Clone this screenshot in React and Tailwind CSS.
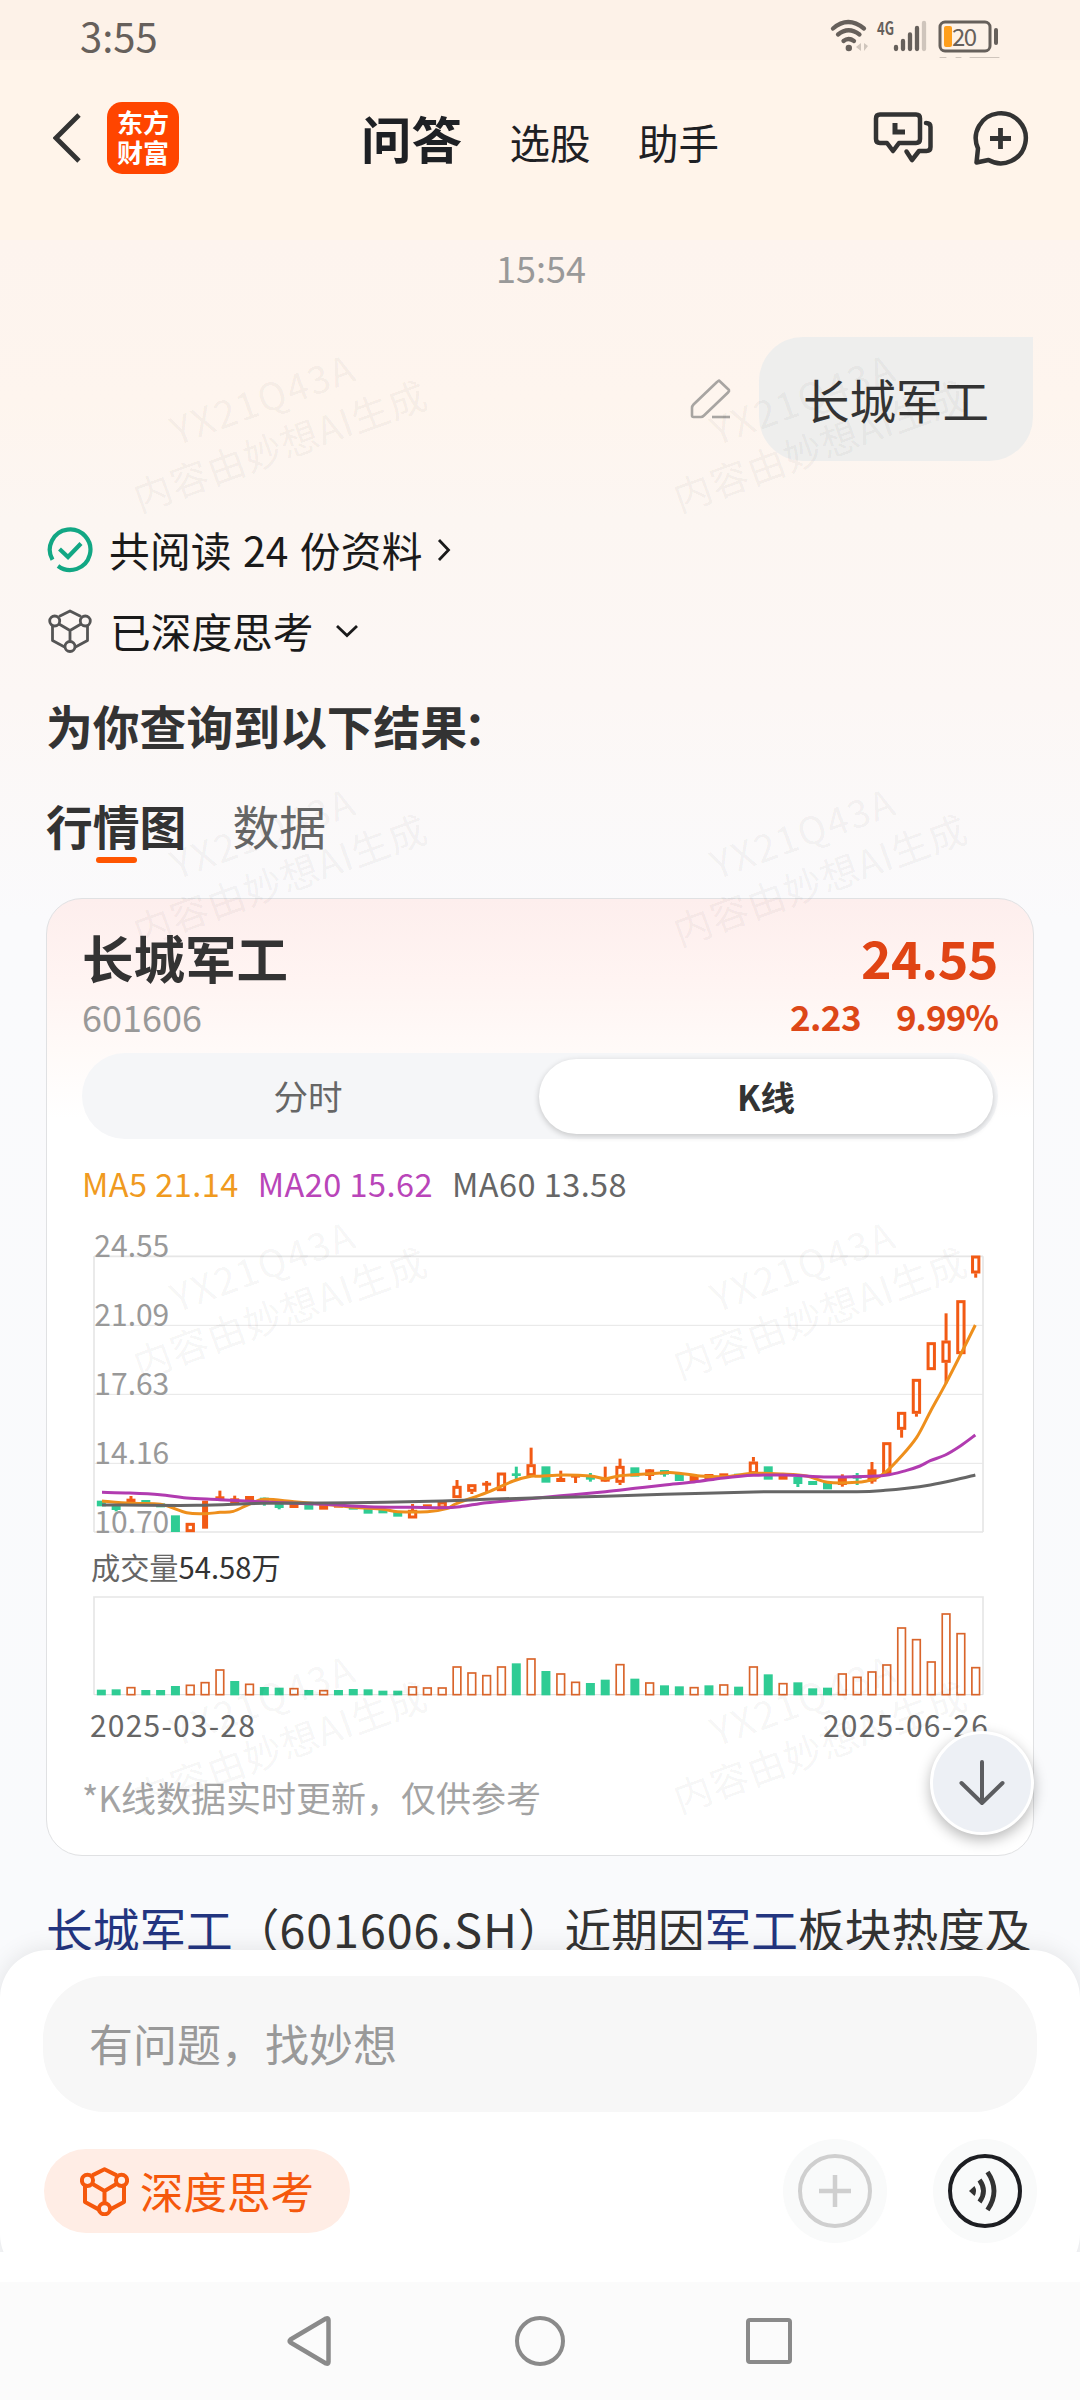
// src/App.jsx
import React from 'react';

const UP = '#f25a14';
const DOWN = '#2fcc94';

// Chart units are a third of a pixel
const STEP = 44.46;
const FIRST = 64;

// [kind, bodyTop, bodyBottom, wickTop, wickBottom]; g = down, r = up, h = up (hollow)
const candles = [
  ['g', 842, 859], ['g', 857, 870, 857, 874], ['r', 836, 848, 828, 848], ['g', 840, 851],
  ['g', 850, 862], ['g', 886, 936], ['h', 909, 936], ['n', 842, 926],
  ['r', 829, 838, 812, 838], ['r', 835, 850, 827, 850], ['r', 828, 842], ['g', 833, 850, 833, 857],
  ['g', 851, 864, 851, 868], ['r', 850, 864], ['g', 853, 869], ['r', 855, 869],
  ['r', 853, 863], ['g', 855, 869], ['g', 865, 881], ['g', 868, 880],
  ['g', 873, 890], ['h', 870, 895, 852, 870], ['r', 853, 866], ['h', 845, 865],
  ['h', 798, 834, 780, 798], ['h', 793, 815, 815, 822], ['r', 788, 797, 783, 816], ['h', 758, 813],
  ['g', 760, 768, 740, 777], ['h', 733, 768, 683, 733], ['g', 739, 788], ['r', 774, 786, 752, 786],
  ['r', 764, 773, 764, 789], ['g', 766, 779, 759, 785], ['r', 773, 785, 740, 785], ['h', 738, 788, 716, 795],
  ['g', 742, 770], ['r', 748, 768, 748, 780], ['g', 750, 764, 750, 770], ['g', 762, 783],
  ['r', 765, 783], ['r', 762, 783], ['r', 760, 772], ['g', 761, 770],
  ['h', 725, 762, 711, 725], ['g', 739, 779], ['r', 765, 779], ['g', 771, 792, 771, 801],
  ['g', 783, 795], ['g', 788, 808], ['r', 768, 795, 763, 800], ['g', 765, 776, 759, 795],
  ['r', 748, 785, 726, 791], ['h', 667, 762], ['h', 576, 629, 629, 653], ['h', 477, 581, 581, 590],
  ['h', 367, 450], ['h', 362, 428, 280, 490], ['h', 241, 402], ['h', 107, 160, 160, 173],
];

const ma5 = [
  [66, 843], [153, 850], [242, 853], [320, 878], [375, 881], [420, 877], [460, 874], [509, 852], [553, 838],
  [642, 845], [731, 853], [820, 862], [909, 868], [953, 875], [1042, 875], [1100, 866], [1131, 850],
  [1220, 818], [1300, 783], [1353, 769], [1380, 769], [1450, 765], [1531, 768], [1576, 776], [1620, 767],
  [1710, 761], [1780, 758], [1860, 768], [1940, 770], [2020, 760], [2109, 762], [2180, 768], [2243, 787],
  [2330, 787], [2380, 778], [2416, 757], [2461, 712], [2510, 652], [2551, 575], [2596, 493], [2641, 405], [2686, 315],
];

const ma20 = [
  [66, 817], [150, 819], [240, 824], [320, 834], [420, 839], [553, 846], [731, 853], [864, 860], [998, 862],
  [1087, 863], [1140, 860], [1220, 848], [1309, 840], [1380, 833], [1480, 824], [1576, 815], [1665, 805],
  [1754, 795], [1842, 786], [1931, 774], [2020, 766], [2109, 765], [2243, 771], [2331, 770], [2416, 766],
  [2480, 751], [2520, 738], [2551, 722], [2596, 705], [2641, 678], [2686, 645],
];

const ma60 = [
  [66, 855], [350, 856], [553, 850], [820, 848], [1087, 843], [1220, 838], [1380, 833], [1576, 829],
  [1754, 823], [2020, 816], [2109, 815], [2331, 815], [2416, 811], [2480, 805], [2551, 795], [2620, 781], [2686, 765],
];

// [top, isUp]
const volumes = [
  [449, 0], [448, 0], [442, 1], [450, 0], [450, 0], [438, 0], [435, 1], [427, 1], [389, 1], [423, 0],
  [432, 1], [441, 0], [443, 0], [445, 1], [450, 0], [451, 1], [450, 0], [447, 0], [448, 0], [452, 0],
  [452, 0], [440, 1], [443, 1], [443, 1], [380, 1], [398, 1], [406, 1], [380, 1], [370, 0], [356, 1],
  [393, 0], [401, 1], [426, 1], [429, 0], [419, 0], [373, 1], [416, 0], [428, 1], [436, 0], [439, 0],
  [442, 1], [436, 0], [434, 1], [440, 0], [380, 1], [403, 0], [430, 1], [427, 0], [445, 0], [443, 0],
  [401, 1], [411, 1], [395, 1], [374, 1], [263, 1], [298, 1], [365, 1], [221, 1], [280, 1], [382, 1],
];

const priceLines = [
  { y: 109, label: '24.55' },
  { y: 316, label: '21.09' },
  { y: 523, label: '17.63' },
  { y: 730, label: '14.16' },
  { y: 936, label: '10.70' },
];

function smooth(points) {
  return points.reduce((d, p, i) => {
    if (i === 0) return `M${p[0]} ${p[1]}`;
    const a = points[i - 2] || points[i - 1];
    const b = points[i - 1];
    const c = points[i + 1] || p;
    const c1 = [b[0] + (p[0] - a[0]) / 6, b[1] + (p[1] - a[1]) / 6];
    const c2 = [p[0] - (c[0] - b[0]) / 6, p[1] - (c[1] - b[1]) / 6];
    return `${d}C${c1[0]} ${c1[1]} ${c2[0]} ${c2[1]} ${p[0]} ${p[1]}`;
  }, '');
}

function Candle({ data, x }) {
  const [kind, top, bottom, wickTop, wickBottom] = data;
  const color = kind === 'g' ? DOWN : UP;
  const hollow = kind === 'h';
  const half = kind === 'n' ? 9 : 13.5;
  return (
    <g>
      {wickTop !== undefined && !hollow && (
        <rect x={x - 4.5} y={wickTop} width="9" height={wickBottom - wickTop} fill={color} />
      )}
      {wickTop !== undefined && hollow && wickTop < top && (
        <rect x={x - 4.5} y={wickTop} width="9" height={top - wickTop} fill={color} />
      )}
      {wickTop !== undefined && hollow && wickBottom > bottom && (
        <rect x={x - 4.5} y={bottom} width="9" height={wickBottom - bottom} fill={color} />
      )}
      {hollow ? (
        <rect x={x - 9.5} y={top + 4} width="19" height={bottom - top - 8} fill="none" stroke={color} strokeWidth="9" />
      ) : (
        <rect x={x - half} y={top} width={half * 2} height={bottom - top} fill={color} />
      )}
    </g>
  );
}

function PriceChart() {
  return (
    <svg className="mt-[17px] -ml-[2px] block h-[320px] w-[920px]" viewBox="0 0 2760 960">
      {priceLines.map(({ y }, i) => (
        <line key={y} x1="42" x2="2709" y1={y} y2={y} stroke="#e6e6e6" strokeWidth={i === 0 || i === 4 ? 5 : 3} />
      ))}
      <path d="M42 109V936M2709 109V936" stroke="#e6e6e6" strokeWidth="5" />
      {priceLines.map(({ y, label }) => (
        <text key={label} x="43" y={y + 3} fontSize="90" fill="#999">{label}</text>
      ))}
      {candles.map((c, i) => (
        <Candle key={i} data={c} x={FIRST + STEP * i} />
      ))}
      <g fill="none" strokeWidth="9">
        <path d={smooth(ma5)} stroke="#ee8f1c" />
        <path d={smooth(ma20)} stroke="#b13bb0" />
        <path d={smooth(ma60)} stroke="#666" />
      </g>
    </svg>
  );
}

function VolumeChart() {
  return (
    <svg className="-ml-[2px] block h-[114px] w-[920px]" viewBox="0 138 2760 342">
      <path d="M42 464V171H2709V464" fill="none" stroke="#e6e6e6" strokeWidth="5" />
      <path d="M42 464H2709" stroke="#ddd" strokeWidth="3" />
      {volumes.map(([top, up], i) => {
        const x = FIRST + STEP * i;
        return up ? (
          <rect key={i} x={x - 11.5} y={top + 1} width="23" height={463 - top} fill="#fff" stroke="#d9652b" strokeWidth="5" />
        ) : (
          <rect key={i} x={x - 13.5} y={top} width="27" height={466 - top} fill={DOWN} />
        );
      })}
    </svg>
  );
}

function CubeIcon({ className, strokeWidth = 2.8 }) {
  return (
    <svg className={className} viewBox="0 0 44 44" fill="none" stroke="currentColor" strokeWidth={strokeWidth} strokeLinejoin="round">
      <path d="M11 7.500 22 2l11 5.500M4.500 17V31.500L17.500 38.500M39.500 17V31.500L26.500 38.500M11 15 22 21.500 33 15M22 21.500V33" />
      <circle cx="6.700" cy="12" r="5" />
      <circle cx="37.300" cy="12" r="5" />
      <circle cx="22" cy="37.500" r="5" />
    </svg>
  );
}

function StatusBar() {
  return (
    <div className="flex h-[60px] shrink-0 items-start bg-[#fdf2e8] pl-[80px] text-[#66605b]">
      <span className="mt-[5px] text-[40px] leading-[60px]">3:55</span>
      <svg className="ml-auto mr-[78px] block h-[60px] w-[174px]" viewBox="0 0 174 60" fill="none" stroke="currentColor" strokeLinecap="round">
        <path d="M5 28.500q15-13 31 0M10 34.500q10.500-8.500 21.500 0M15.500 41q5-4 10.500 0" strokeWidth="4.300" />
        <circle cx="20.800" cy="48" r="3.200" fill="currentColor" stroke="none" />
        <path d="M33 43v8l-5-4zM36 43v8l4-5z" fill="#cfc5bc" stroke="none" />
        <text x="49" y="34.500" fontSize="18" fontWeight="bold" fill="currentColor" stroke="none" textLength="17" lengthAdjust="spacingAndGlyphs">4G</text>
        <path d="M68 47v2M75 41v8M82 34.500v14.500M89 28v21" strokeWidth="4.300" />
        <path d="M96 23v26" stroke="#cfc5bc" strokeWidth="4.300" />
        <rect x="112" y="22" width="50" height="29" rx="5" strokeWidth="3" />
        <rect x="116" y="26" width="8" height="21" rx="2" fill="#ff9f1c" stroke="none" />
        <text x="124" y="45.500" fontSize="24" fill="currentColor" stroke="none" textLength="25">20</text>
        <path d="M168 30v13" strokeWidth="4" />
        <path d="M112 57.500h6M128 57.500h5M142 57.500h29" stroke="#cfc5bc" strokeWidth="1" />
      </svg>
    </div>
  );
}

function Header() {
  return (
    <div className="flex h-[180px] shrink-0 items-start bg-[#fff4ea] pl-[53px] text-[#1e2024]">
      <svg className="mt-[53px] block h-[50px] w-[28px]" viewBox="0 0 28 50" fill="none" stroke="#333" strokeWidth="4.800">
        <path d="M26 2 3 25l23 23" />
      </svg>
      <div className="mt-[42px] ml-[26px] flex h-[72px] w-[72px] flex-col items-center justify-center rounded-[15px] bg-[#ff4500] pb-[3px] text-[26px] leading-[30px] font-bold text-white">
        <span>东方</span>
        <span>财富</span>
      </div>
      <div className="ml-[182px] flex items-baseline gap-[47.5px] text-[40.5px]">
        <span className="text-[50.5px] leading-[154px] font-bold">问答</span>
        <span>选股</span>
        <span>助手</span>
      </div>
      <svg className="mt-[50px] ml-[154px] block h-[56px] w-[62px]" viewBox="0 0 62 56" fill="none" stroke="#333" strokeWidth="4.500" strokeLinejoin="round" strokeLinecap="round">
        <path d="M7 4.500h36q4 0 4 4V29q0 4-4 4H26l-6 8-6-8H7q-4 0-4-4V8.500q0-4 4-4z" />
        <path d="M53 13q4.500 0 4.500 4v20q0 4-4 4H46l-7 9-5.500-8.500" />
        <path d="M22 13v9h10" strokeLinecap="butt" strokeLinejoin="miter" strokeWidth="5" />
      </svg>
      <svg className="mt-[50px] ml-[37px] block h-[58px] w-[58px]" viewBox="0 0 58 58" fill="none" stroke="#333" strokeWidth="4.500" strokeLinejoin="round">
        <path d="M6 38.500A25 25 0 1 1 16.500 50L4.500 52.500z" />
        <path d="M28.500 18v21M18 28.500h21" strokeWidth="4.800" />
      </svg>
    </div>
  );
}

// Centres of the repeating text stamp
const stamps = [423, 856.5, 1290, 1723.5].flatMap((y) => [271.5, 811.5].map((x) => ({ x, y })));

function Watermark() {
  return (
    <div className="pointer-events-none absolute inset-x-0 top-0 h-[1950px] overflow-hidden text-[38px] leading-[50px] text-black/5">
      {stamps.map(({ x, y }) => (
        <div
          key={`${x}-${y}`}
          className="absolute flex w-[320px] -translate-x-1/2 -translate-y-1/2 -rotate-20 flex-col items-center whitespace-nowrap"
          style={{ left: x - 1, top: y - 2 }}
        >
          <span className="tracking-[2px]">YX21Q43A</span>
          <span className="tracking-[1px]">内容由妙想AI生成</span>
        </div>
      ))}
    </div>
  );
}

function StockCard() {
  return (
    <div className="mt-[35px] h-[958px] rounded-[36px] border border-[#e0e1e3] bg-white bg-[linear-gradient(#fdeeed_0,#fff4f2_80px,#fffaf8_150px,#fff_220px)] px-[35px] pt-[28px]">
      <div className="flex h-[60px] items-center justify-between">
        <span className="text-[51.5px] font-bold text-[#333]">长城军工</span>
        <span className="text-[52px] font-bold tracking-[-0.5px] text-[#e04414]">24.55</span>
      </div>
      <div className="mt-[9px] flex h-[40px] items-center text-[36px]">
        <span className="text-[#999]">601606</span>
        <span className="ml-auto text-[35px] font-bold tracking-[-0.6px] text-[#dd4717]">2.23</span>
        <span className="ml-[35px] text-[35px] font-bold tracking-[-1px] text-[#dd4717]">9.99%</span>
      </div>
      <div className="mt-[17px] flex h-[86px] w-[916px] items-center rounded-full bg-[#f5f6f8] pr-[4px] text-[34.5px]">
        <span className="w-[452px] text-center text-[#666]">分时</span>
        <span className="ml-[5px] flex h-[75px] w-[454px] items-center justify-center rounded-full bg-white pt-[2px] font-bold text-[#333] shadow-[0_2px_6px_rgba(0,0,0,0.2)]">K线</span>
      </div>
      <div className="mt-[24px] flex h-[40px] items-center gap-[19px] text-[32.5px] tracking-[0.45px]">
        <span className="text-[#f09a20]">MA5 21.14</span>
        <span className="text-[#b945b9]">MA20 15.62</span>
        <span className="text-[#666]">MA60 13.58</span>
      </div>
      <PriceChart />
      <div className="mt-[7px] flex h-[40px] items-center pl-[9px] text-[29.2px]">
        <span className="text-[#666]">成交量</span>
        <span className="text-[#333]">54.58万</span>
      </div>
      <div className="-mt-px">
        <VolumeChart />
      </div>
      <div className="mt-[4px] flex h-[40px] items-center justify-between pr-[9px] pl-[8px] text-[30px] tracking-[1.2px] text-[#666]">
        <span>2025-03-28</span>
        <span>2025-06-26</span>
      </div>
      <div className="mt-[33px] flex h-[40px] items-center text-[35px] text-[#a3a3a3]">*K线数据实时更新，仅供参考</div>
    </div>
  );
}

function Chat() {
  return (
    <div className="h-[1710px] shrink-0 overflow-hidden px-[46px] text-[#333]">
      <div className="flex h-[54px] items-center justify-center pl-[2px] text-[36px] text-[#999]">15:54</div>

      <div className="mt-[43px] flex h-[124px] items-center justify-end">
        <svg className="mr-[26px] block h-[44px] w-[44px]" viewBox="0 0 44 44" fill="none" stroke="#a8a5a2" strokeWidth="2.600" strokeLinejoin="round">
          <path d="M30 3.500 40 13q.5 1-1 2.500L15 38.500q-1.500 1.500-3 1.500H4.500q-1.500 0-1.500-1.500V31q0-2 1.500-3.500L28 5z" />
          <path d="M23 40h18" />
        </svg>
        <div className="mr-px flex h-[124px] w-[274px] items-center justify-center rounded-[44px] rounded-tr-none bg-[#eeeeed] text-[46.5px]">长城军工</div>
      </div>

      <div className="mt-[58px] flex h-[61px] items-center text-[40.7px] text-[#1a1a1a]">
        <svg className="ml-px block h-[46px] w-[46px]" viewBox="0 0 46 46" fill="none" stroke="#12a784" strokeWidth="4.200">
          <path d="M5.500 32.800A20.300 20.300 0 1 1 11 39" />
          <path d="m12.500 22 8.500 8L34 16.500" />
        </svg>
        <span className="ml-[16px] tracking-[0.2px] [word-spacing:2px]">共阅读 24 份资料</span>
        <svg className="ml-[14px] block h-[24px] w-[14px]" viewBox="0 0 14 24" fill="none" stroke="currentColor" strokeWidth="2.800">
          <path d="m2 2 9.500 10L2 22" />
        </svg>
      </div>

      <div className="mt-[21px] flex h-[60px] items-center text-[40.7px] text-[#1a1a1a]">
        <CubeIcon className="ml-[2px] block h-[44px] w-[44px] text-[#555]" />
        <span className="ml-[18px]">已深度思考</span>
        <svg className="ml-[22px] block h-[14px] w-[24px]" viewBox="0 0 24 14" fill="none" stroke="currentColor" strokeWidth="2.800">
          <path d="m2 2 10 9.500L22 2" />
        </svg>
      </div>

      <div className="mt-[34px] flex h-[60px] items-center pt-px text-[46.8px] font-bold">
        <span>为你查询到以下结果</span>
        <span className="-ml-[4px]">：</span>
      </div>

      <div className="mt-[40px] flex h-[60px] items-center gap-[46px] pt-px text-[46.8px]">
        <span className="font-bold">行情图</span>
        <span className="text-[#666]">数据</span>
      </div>
      <div className="mt-[2px] ml-[50px] h-[6px] w-[41px] rounded-full bg-[#ff5500]" />

      <StockCard />

      <div className="mt-[41px] flex h-[60px] items-center pt-[2px] text-[46.7px] whitespace-nowrap">
        <span className="text-[#233580]">长城军工</span>
        <span>（</span>
        <span className="tracking-[0.9px]">601606.SH</span>
        <span>）近期因</span>
        <span className="text-[#233580]">军工</span>
        <span>板块热度及</span>
      </div>
    </div>
  );
}

function Composer() {
  return (
    <div className="-mb-[30px] h-[332px] shrink-0 rounded-[48px] bg-white px-[43px] pt-[26px] shadow-[0_0_24px_rgba(0,0,0,0.1)]">
      <div className="flex h-[136px] items-center rounded-[62px] bg-[#f7f7f7] pb-[3px] pl-[46px] text-[44px] text-[#999]">有问题，找妙想</div>
      <div className="mt-[27px] flex h-[104px] items-center">
        <div className="ml-px flex h-[84px] w-[306px] items-center rounded-full bg-[#ffede5] pl-[36px] text-[43.5px] text-[#f5580c]">
          <CubeIcon className="block h-[49px] w-[49px]" strokeWidth={3.6} />
          <span className="ml-[11px]">深度思考</span>
        </div>
        <svg className="ml-auto block h-[104px] w-[104px] rounded-full bg-[#f9fafa]" viewBox="0 0 104 104" fill="none" stroke="#cfcfcf">
          <circle cx="52" cy="52" r="35" strokeWidth="4" />
          <path d="M52 36v32M36 52h32" strokeWidth="4.500" />
        </svg>
        <svg className="ml-[46px] block h-[104px] w-[104px] rounded-full bg-[#f9fafa]" viewBox="0 0 104 104" fill="none" stroke="#1d1e22">
          <circle cx="52" cy="52" r="35" strokeWidth="4" />
          <path d="M36 52l5.500-5q3 5 0 10z" fill="#333" stroke="none" />
          <path d="M46.500 41q8 11 0 22M54.500 33q13 19 0 38" stroke="#333" strokeWidth="4.800" />
        </svg>
      </div>
    </div>
  );
}

function NavBar() {
  return (
    <div className="relative flex grow items-center bg-[#fbfbfb] pl-[285px]">
      <svg className="block h-[54px] w-[50px]" viewBox="0 0 50 54" fill="none" stroke="#8a8a8a" strokeWidth="4.500" strokeLinejoin="round">
        <path d="M5.500 25.500 41 4.500q2.500-1 2.500 1.500v42q0 2.500-2.500 1.500L5.500 28.500q-1.500-1.500 0-3z" />
      </svg>
      <div className="ml-[180px] h-[50px] w-[50px] rounded-full border-[4.5px] border-[#8a8a8a]" />
      <div className="ml-[181px] h-[46px] w-[46px] rounded-[4px] border-[4.5px] border-[#8a8a8a]" />
    </div>
  );
}

export default function App() {
  return (
    <div className="relative flex h-[2400px] w-[1080px] flex-col overflow-hidden bg-[linear-gradient(#fff4ea_0,#fdf4ee_240px,#fef5ee_400px,#fcf6f2_520px,#fcf7f5_700px,#fafafc_920px,#f9fafc_1900px)] font-['Noto_Sans_CJK_SC',sans-serif]">
      <StatusBar />
      <Header />
      <Chat />
      <Composer />
      <div className="relative h-[30px] shrink-0 bg-white" />
      <NavBar />

      <Watermark />

      {/* Jump to latest */}
      <div className="absolute top-[1731px] left-[930px] flex h-[104px] w-[104px] items-center justify-center rounded-full border-3 border-white bg-[#edf0f5] shadow-[0_5px_14px_rgba(0,0,0,0.28)]">
        <svg className="block h-[48px] w-[50px]" viewBox="0 0 50 48" fill="none" stroke="#5c5d60" strokeWidth="4" strokeLinecap="round" strokeLinejoin="round">
          <path d="M25 3v41M4.500 24 25 44l20.500-20" />
        </svg>
      </div>
    </div>
  );
}
